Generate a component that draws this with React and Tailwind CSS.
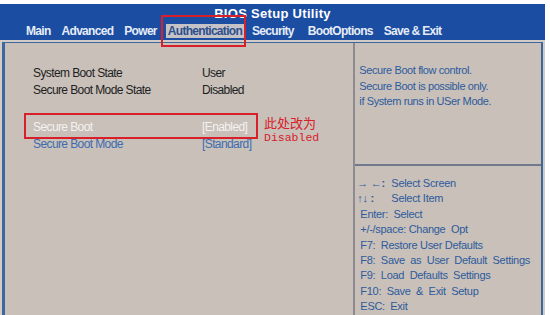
import React from "react";

export default function App() {
  const tabs = [
    ["Main", "ml-[26px]"],
    ["Advanced", "ml-[11px]"],
    ["Power", "ml-[11px]"],
    ["Authentication", "ml-[9px]"],
    ["Security", "ml-[8px]"],
    ["BootOptions", "ml-[14px]"],
    ["Save & Exit", "ml-[11px]"],
  ];
  const help = [
    "Enter:  Select",
    "+/-/space: Change  Opt",
    "F7:  Restore User Defaults",
    "F8:  Save  as  User  Default  Settings",
    "F9:  Load  Defaults  Settings",
    "F10:  Save  &  Exit  Setup",
    "ESC:  Exit",
  ];
  return (
    <div className="relative w-[550px] h-[315px] overflow-hidden bg-white" style={{ fontFamily: '"Liberation Sans", Arial, sans-serif' }}>
      <div className="mt-[4px] w-[545px] h-[36px] bg-[#1b4ea3] flex flex-col">
        <div className="h-[18px] pt-[2px] text-center text-[13px] font-bold leading-[16px] text-white tracking-[0.3px]">
          BIOS Setup Utility
        </div>
        <div className="flex items-end h-[16px] text-[12px] font-bold leading-[14px] tracking-[-0.7px] text-[#e6ecf6]">
          {tabs.map(([t, m]) => (
            <span
              key={t}
              className={m + (t === "Authentication" ? " bg-[#c6c3c6] px-[2px] text-[#2c4f8e]" : "")}
            >
              {t}
            </span>
          ))}
        </div>
      </div>
      <div className="w-[545px] h-[275px] bg-[#d3ccc6] pl-[2px] pt-[2px] pr-[2px]">
        <div className="flex h-full w-[541px] border-l-[3px] border-t border-r-2 border-[#3e679e] bg-[#c8c0b9]">
          <div className="w-[351px] border-r-2 border-[#8e8a90] pt-[22px] text-[12px] leading-[17px] tracking-[-0.6px]">
            <div className="flex text-[#1e1e22]"><span className="ml-[28px] w-[169px]">System Boot State</span><span>User</span></div>
            <div className="flex text-[#1e1e22]"><span className="ml-[28px] w-[169px]">Secure Boot Mode State</span><span>Disabled</span></div>
            <div className="h-[20px]" />
            <div className="flex text-[#f4f2ef]"><span className="ml-[28px] w-[169px]">Secure Boot</span><span>[Enabled]</span></div>
            <div className="flex text-[#3d6db0]"><span className="ml-[28px] w-[169px]">Secure Boot Mode</span><span>[Standard]</span></div>
          </div>
          <div className="flex flex-col w-[186px]">
            <div className="h-[123px] border-b-2 border-[#6f7a8c] pl-[4px] pt-[20px] text-[11px] leading-[15.5px] tracking-[-0.4px] text-[#2d5b9c]">
              <div>Secure Boot flow control.</div>
              <div>Secure Boot is possible only.</div>
              <div>if System runs in USer Mode.</div>
            </div>
            <div className="pl-[2px] pt-[10px] text-[11px] leading-[15.4px] tracking-[-0.3px] text-[#2d5b9c] whitespace-pre">
              <div className="flex"><span className="w-[34px] font-bold">→ ←:</span><span>Select Screen</span></div>
              <div className="flex"><span className="w-[34px] font-bold">↑↓ :</span><span>Select Item</span></div>
              {help.map((h) => (
                <div key={h} className="pl-[3px]">{h}</div>
              ))}
            </div>
          </div>
        </div>
      </div>
      <div className="absolute left-[161px] top-[15px] w-[85px] h-[32px] border-2 border-[#d8202a]" />
      <div className="absolute left-[24px] top-[113px] w-[234px] h-[26px] border-2 border-[#d8202a]" />
      <div className="absolute left-[264px] top-[116px] text-[#d8202a] text-[13px] leading-[14px]" style={{ fontFamily: '"Noto Sans CJK SC", sans-serif' }}>此处改为</div>
      <div className="absolute left-[264px] top-[131px] text-[#d8202a] text-[11.5px] leading-[13px]" style={{ fontFamily: '"Liberation Mono", monospace' }}>Disabled</div>
    </div>
  );
}
